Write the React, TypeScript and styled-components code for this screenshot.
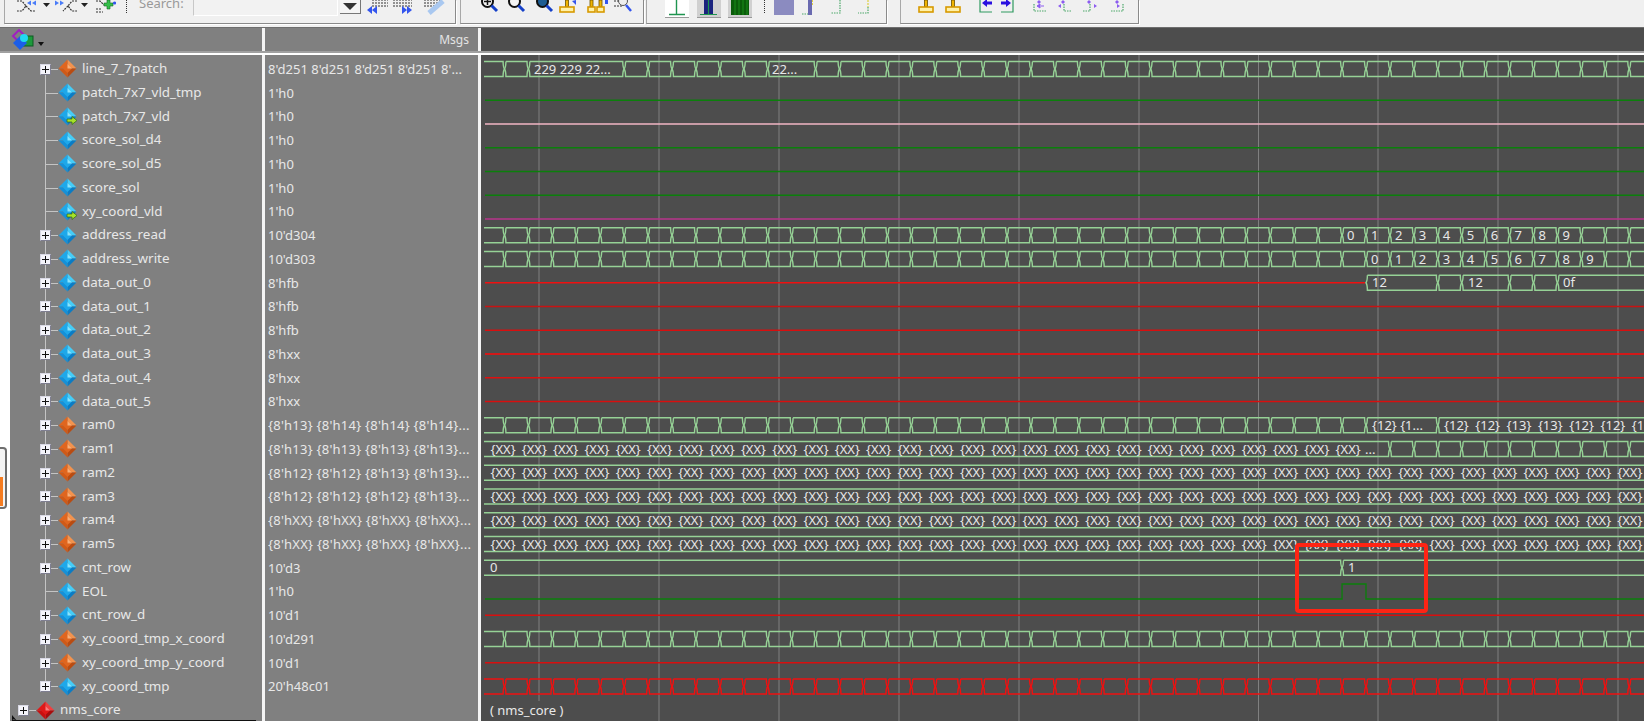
import styled, { createGlobalStyle } from "styled-components";

const FONT = `"Noto Sans", "Liberation Sans", sans-serif`;
const ROW_H = 23.75;
const FIRST_ROW_Y = 69;
const EDGE_X = 504.5;
const EDGE_STEP = 23.93;
const BUS = "#96d296";
const LOW = "#0b7f0b";
const RED = "#d80f0f";

type Kind = "orange" | "blue" | "blueIn" | "red";

interface Signal {
  name: string;
  value: string;
  kind: Kind;
  expand?: boolean;
}

const signals: Signal[] = [
  { name: "line_7_7patch", value: "8'd251 8'd251 8'd251 8'd251 8'...", kind: "orange", expand: true },
  { name: "patch_7x7_vld_tmp", value: "1'h0", kind: "blue" },
  { name: "patch_7x7_vld", value: "1'h0", kind: "blueIn" },
  { name: "score_sol_d4", value: "1'h0", kind: "blue" },
  { name: "score_sol_d5", value: "1'h0", kind: "blue" },
  { name: "score_sol", value: "1'h0", kind: "blue" },
  { name: "xy_coord_vld", value: "1'h0", kind: "blueIn" },
  { name: "address_read", value: "10'd304", kind: "blue", expand: true },
  { name: "address_write", value: "10'd303", kind: "blue", expand: true },
  { name: "data_out_0", value: "8'hfb", kind: "blue", expand: true },
  { name: "data_out_1", value: "8'hfb", kind: "blue", expand: true },
  { name: "data_out_2", value: "8'hfb", kind: "blue", expand: true },
  { name: "data_out_3", value: "8'hxx", kind: "blue", expand: true },
  { name: "data_out_4", value: "8'hxx", kind: "blue", expand: true },
  { name: "data_out_5", value: "8'hxx", kind: "blue", expand: true },
  { name: "ram0", value: "{8'h13} {8'h14} {8'h14} {8'h14}...", kind: "orange", expand: true },
  { name: "ram1", value: "{8'h13} {8'h13} {8'h13} {8'h13}...", kind: "orange", expand: true },
  { name: "ram2", value: "{8'h12} {8'h12} {8'h13} {8'h13}...", kind: "orange", expand: true },
  { name: "ram3", value: "{8'h12} {8'h12} {8'h12} {8'h13}...", kind: "orange", expand: true },
  { name: "ram4", value: "{8'hXX} {8'hXX} {8'hXX} {8'hXX}...", kind: "orange", expand: true },
  { name: "ram5", value: "{8'hXX} {8'hXX} {8'hXX} {8'hXX}...", kind: "orange", expand: true },
  { name: "cnt_row", value: "10'd3", kind: "blue", expand: true },
  { name: "EOL", value: "1'h0", kind: "blue" },
  { name: "cnt_row_d", value: "10'd1", kind: "blue", expand: true },
  { name: "xy_coord_tmp_x_coord", value: "10'd291", kind: "orange", expand: true },
  { name: "xy_coord_tmp_y_coord", value: "10'd1", kind: "orange", expand: true },
  { name: "xy_coord_tmp", value: "20'h48c01", kind: "blue", expand: true },
];

const DIAMOND = {
  orange: ["#f3934e", "#e0661f", "#b94c12", "#cf5a18", "#f7b07a"],
  blue: ["#45cdf8", "#1ea8ea", "#0b7cc4", "#1590d8", "#8be4fc"],
  blueIn: ["#45cdf8", "#1ea8ea", "#0b7cc4", "#1590d8", "#8be4fc"],
  red: ["#f04040", "#e01818", "#a80d0d", "#c81010", "#f88080"],
};

const Diamond = ({ kind }: { kind: Kind }) => {
  const c = DIAMOND[kind];
  return (
    <DiamondSvg viewBox="0 0 19 19">
      <polygon points="9.5,0.5 18.5,9.5 9.5,9.5" fill={c[0]} />
      <polygon points="9.5,0.5 0.5,9.5 9.5,9.5" fill={c[1]} />
      <polygon points="18.5,9.5 9.5,18.5 9.5,9.5" fill={c[2]} />
      <polygon points="0.5,9.5 9.5,18.5 9.5,9.5" fill={c[3]} />
      <polygon points="9.5,5 14,9.5 9.5,14 5,9.5" fill={c[1]} />
      <polygon points="9.5,5 14,9.5 9.5,9.5" fill={c[4]} />
      {kind === "blueIn" && (
        <polygon
          points="9,12 14,12 14,9.5 19,13.5 14,17.5 14,15 9,15"
          fill="#a6e22a"
          stroke="#2f6b10"
          strokeWidth="0.7"
        />
      )}
    </DiamondSvg>
  );
};

const edge = (k: number) => EDGE_X + EDGE_STEP * k;
const rowY = (i: number) => FIRST_ROW_Y + ROW_H * i;

const Segment = ({
  from,
  to,
  cy,
  color,
  open,
}: {
  from: number;
  to: number;
  cy: number;
  color: string;
  open?: boolean;
}) => {
  const t = cy - 7.5;
  const b = cy + 7.5;
  const left = open
    ? `M${from} ${t}`
    : `M${from + 1.4} ${t} Q${from + 1.4} ${cy - 2} ${from} ${cy} Q${from + 1.4} ${cy + 2} ${from + 1.4} ${b}`;
  const start = open ? `M${from} ${b}` : "";
  return (
    <path
      d={`${left} ${start} L${to - 1.4} ${b} Q${to - 1.4} ${cy + 2} ${to} ${cy} Q${to - 1.4} ${cy - 2} ${to - 1.4} ${t} L${open ? from : from + 1.4} ${t}`}
      fill="none"
      stroke={color}
      strokeWidth="1.4"
    />
  );
};

// bus row: stops are edge numbers, -1 means the start of the trace
const Bus = ({
  row,
  stops,
  color = BUS,
}: {
  row: number;
  stops: number[];
  color?: string;
}) => {
  const cy = rowY(row);
  return (
    <>
      {stops.slice(0, -1).map((k, i) => (
        <Segment
          key={k}
          from={k < 0 ? 484 : edge(k)}
          to={edge(stops[i + 1])}
          cy={cy}
          color={color}
          open={k < 0}
        />
      ))}
    </>
  );
};

const range = (a: number, b: number) => Array.from({ length: b - a + 1 }, (_, i) => a + i);

const XxRun = ({ row, count }: { row: number; count: number }) => (
  <>
    {range(0, count - 1).map((i) => (
      <WaveLabel key={i} x={490.5 + 31.3 * i} y={rowY(row) + 4.5}>
        {"{XX}"}
      </WaveLabel>
    ))}
  </>
);

const Rail = ({ y, color, from = 485, to = 1644, w = 1.3 }: { y: number; color: string; from?: number; to?: number; w?: number }) => (
  <line x1={from} x2={to} y1={y} y2={y} stroke={color} strokeWidth={w} />
);

const WaveCanvas = () => (
  <WaveSvg viewBox="481 55 1163 666">
    {[659, 779, 899, 1019, 1139, 1258.5, 1378, 1498, 1618].map((x) => (
      <line key={x} x1={x} x2={x} y1={55} y2={721} stroke="#808080" strokeWidth="1" />
    ))}
    <line x1={539} x2={539} y1={55} y2={701} stroke="#808080" strokeWidth="1" />

    <Bus row={0} stops={[-1, 0, 1, 5, 6, 7, 8, 9, 10, 11, 13, ...range(14, 48)]} />
    <WaveLabel x={534} y={rowY(0) + 4.5}>229 229 22...</WaveLabel>
    <WaveLabel x={772} y={rowY(0) + 4.5}>22...</WaveLabel>

    <Rail y={rowY(1) + 7.5} color={LOW} />
    <Rail y={rowY(2) + 7.5} color="#f2b6c4" />
    <Rail y={rowY(3) + 7.5} color={LOW} />
    <Rail y={rowY(4) + 7.5} color={LOW} />
    <Rail y={rowY(5) + 7.5} color={LOW} />
    <Rail y={rowY(6) + 7.5} color="#b8348c" />

    <Bus row={7} stops={[-1, ...range(0, 48)]} />
    {range(0, 9).map((n) => (
      <WaveLabel key={n} x={edge(35 + n) + 5} y={rowY(7) + 4.5}>{n}</WaveLabel>
    ))}
    <Bus row={8} stops={[-1, ...range(0, 48)]} />
    {range(0, 9).map((n) => (
      <WaveLabel key={n} x={edge(36 + n) + 5} y={rowY(8) + 4.5}>{n}</WaveLabel>
    ))}

    <Rail y={rowY(9)} color="#f01010" to={1365} w={1.5} />
    <Bus row={9} stops={[36, 39, 40, 42, 43, 44, 48]} />
    <WaveLabel x={1372} y={rowY(9) + 4.5}>12</WaveLabel>
    <WaveLabel x={1468} y={rowY(9) + 4.5}>12</WaveLabel>
    <WaveLabel x={1563} y={rowY(9) + 4.5}>0f</WaveLabel>
    <Rail y={rowY(10)} color="#c81212" />
    <Rail y={rowY(11)} color={RED} />
    <Rail y={rowY(12)} color="#ff0808" w={1.5} />
    <Rail y={rowY(13)} color="#e00f0f" />
    <Rail y={rowY(14)} color={RED} />

    <Bus row={15} stops={[-1, ...range(0, 36), 39, 48]} />
    <WaveLabel x={1372} y={rowY(15) + 4.5}>{"{12} {1..."}</WaveLabel>
    {["{12}", "{12}", "{13}", "{13}", "{12}", "{12}", "{1"].map((t, i) => (
      <WaveLabel key={i} x={1444 + 31.3 * i} y={rowY(15) + 4.5}>{t}</WaveLabel>
    ))}

    <Bus row={16} stops={[-1, ...range(37, 48)]} />
    <XxRun row={16} count={28} />
    <WaveLabel x={1365} y={rowY(16) + 4.5}>...</WaveLabel>
    {[17, 18, 19, 20].map((r) => (
      <g key={r}>
        <Bus row={r} stops={[-1, 48]} />
        <XxRun row={r} count={37} />
      </g>
    ))}

    <Bus row={21} stops={[-1, 35, 48]} />
    <WaveLabel x={490} y={rowY(21) + 4.5}>0</WaveLabel>
    <WaveLabel x={1348} y={rowY(21) + 4.5}>1</WaveLabel>

    <path
      d={`M485 ${rowY(22) + 7.5} H${edge(35)} V${rowY(22) - 7.5} H${edge(36)} V${rowY(22) + 7.5} H1644`}
      fill="none"
      stroke={LOW}
      strokeWidth="1.3"
    />
    <Rail y={rowY(23)} color={RED} />
    <Bus row={24} stops={[-1, ...range(0, 48)]} />
    <Rail y={rowY(25)} color={RED} />
    <Bus row={26} stops={[-1, ...range(0, 48)]} color="#f01010" />
    <WaveLabel x={490} y={rowY(27) + 5}>( nms_core )</WaveLabel>
  </WaveSvg>
);

const Dash = styled.path`
  fill: none;
  stroke: #333;
  stroke-width: 1.2;
  stroke-dasharray: 2 1;
`;

const Magnifier = ({ fill, mark }: { fill?: string; mark?: boolean }) => (
  <>
    <circle cx="6.5" cy="1.5" r="5.5" fill={fill ?? "#f4f4f4"} stroke="#111" strokeWidth="2" />
    {mark && <path d="M3 1.5H10M6.5 -2V5" stroke="#111" strokeWidth="1.5" />}
    <path d="M10.5 5.5L16 11" stroke="#1540c8" strokeWidth="3" />
  </>
);

const GoldT = ({ x = 1, w = 14 }: { x?: number; w?: number }) => (
  <>
    <rect x={x + w / 2 - 1.5} y="0" width="3" height="7" fill="#f0b400" stroke="#6b5200" strokeWidth="0.8" />
    <rect x={x} y="7" width={w} height="5" fill="#fff1a8" stroke="#d89a00" strokeWidth="1.6" />
  </>
);

const DotBracket = ({ d }: { d: string }) => (
  <>
    <path d={d} fill="none" stroke="#4ca86a" strokeWidth="1.2" strokeDasharray="1.5 1" />
    <path d="M6 0L8 2L6 4L4 2Z" fill="#8c5cf0" />
  </>
);

const SearchBox = () => (
  <>
    <ToolText $ml={12}>Search:</ToolText>
    <SearchInput $ml={8} />
    <DropButton $ml={2}>
      <svg width="14" height="8" viewBox="0 0 14 8">
        <polygon points="0,0 14,0 7,7" fill="#333" />
      </svg>
    </DropButton>
  </>
);

const Carets = () => <path d="M0 3H7L3.5 7Z" fill="#222" />;

const Toolbar = () => (
  <ToolbarBar>
    <ToolSection $ml={4} $w={452}>
      <ToolIcon $ml={12} width="22" height="24">
        <Dash d="M0 1H5L9 6L5 11H0M9 6L14 11H18" />
        <path d="M10 3L14 0.5V5.5ZM15 3L19 0.5V5.5Z" fill="#4a7cf8" />
      </ToolIcon>
      <ToolIcon $ml={4} width="7" height="24"><Carets /></ToolIcon>
      <ToolIcon $ml={5} width="22" height="24">
        <Dash d="M22 1H17L13 6L17 11H22M13 6L8 11" />
        <path d="M0 0.5L4 3L0 5.5ZM5 0.5L9 3L5 5.5Z" fill="#4a7cf8" />
      </ToolIcon>
      <ToolIcon $ml={4} width="7" height="24"><Carets /></ToolIcon>
      <ToolIcon $ml={7} width="21" height="24">
        <Dash d="M1 1H5L9 5M1 9H6M1 12H8" />
        <path d="M9 3H12V0H15V3H18V6H15V9H12V6H9Z" fill="#35c04a" stroke="#176a25" strokeWidth="0.6" />
        <circle cx="19.5" cy="3" r="1.6" fill="#3355ee" />
      </ToolIcon>
      <ToolDots $ml={10} />
      <SearchBox />
      <ToolIcon $ml={6} width="24" height="24">
        <Dash d="M5 0H21M5 3H21M5 6H21" />
        <path d="M0 10L5 6V14ZM5 10L10 6V14Z" fill="#3355ee" />
      </ToolIcon>
      <ToolIcon $ml={1} width="22" height="24">
        <Dash d="M1 0H20M1 3H20M1 6H20" />
        <path d="M20 10L15 6V14ZM15 10L10 6V14Z" fill="#3355ee" />
      </ToolIcon>
      <ToolIcon $ml={9} width="23" height="24">
        <Dash d="M1 0H18M1 3H16M1 6H12" />
        <path d="M6 13L20 1" stroke="#a9c8f0" strokeWidth="5" />
      </ToolIcon>
    </ToolSection>

    <ToolSection $ml={4} $w={184}>
      <ToolIcon $ml={20} width="18" height="24"><Magnifier mark /></ToolIcon>
      <ToolIcon $ml={9} width="18" height="24"><Magnifier /></ToolIcon>
      <ToolIcon $ml={10} width="18" height="24"><Magnifier fill="#1d5c92" /></ToolIcon>
      <ToolIcon $ml={5} width="20" height="24">
        <GoldT />
        <path d="M13 1L17 0V5Z" fill="#3355ee" />
      </ToolIcon>
      <ToolIcon $ml={8} width="22" height="24">
        <GoldT w={7} />
        <GoldT x={10} w={7} />
        <path d="M18 0H21V4H18Z" fill="#3355ee" />
      </ToolIcon>
      <ToolIcon $ml={4} width="20" height="24">
        <Dash d="M1 1H12M1 6H9" stroke="#3355ee" />
        <circle cx="10" cy="1" r="4.5" fill="#eee" stroke="#555" />
        <path d="M13 5L18 11" stroke="#3355ee" strokeWidth="2.5" />
      </ToolIcon>
    </ToolSection>

    <ToolSection $ml={2} $w={241}>
      <WaveButton $ml={18} $bg="#ffffff">
        <path d="M11.5 0V14M4 14.5H20" stroke="#1f9550" strokeWidth="1.4" />
      </WaveButton>
      <WaveButton $ml={8} $bg="#d0d0d0">
        <rect x="7" y="0" width="9" height="14" fill="#1a237e" />
        <path d="M11.5 0V14M3 14.5H20" stroke="#1f9550" strokeWidth="1.2" />
      </WaveButton>
      <WaveButton $ml={7} $bg="#d0d0d0">
        <rect x="3" y="0" width="18" height="15" fill="#0b5c0b" />
        <path d="M7 0V15M11 0V15M15 0V15M19 0V15" stroke="#1f9a1f" strokeWidth="0.8" />
      </WaveButton>
      <ToolDots $ml={12} />
      <ToolIcon $ml={9} width="20" height="24">
        <rect x="0" y="0" width="20" height="15" fill="#6a6ab0" opacity="0.75" />
      </ToolIcon>
      <ToolIcon $ml={8} width="12" height="24">
        <rect x="6" y="0" width="4" height="15" fill="#6a6ab0" />
        <path d="M10.5 0V6" stroke="#e0d040" strokeWidth="1" strokeDasharray="2 1" />
        <path d="M0 14H6" stroke="#4ca86a" strokeWidth="1.2" strokeDasharray="1.5 1" />
      </ToolIcon>
      <ToolIcon $ml={17} width="10" height="24">
        <path d="M9 0V13H0" fill="none" stroke="#4ca86a" strokeWidth="1.2" strokeDasharray="1.5 1" />
      </ToolIcon>
      <ToolIcon $ml={17} width="11" height="24">
        <path d="M10 0V7" stroke="#e0d040" strokeWidth="1.2" strokeDasharray="2 1" />
        <path d="M10 7V13H0" fill="none" stroke="#4ca86a" strokeWidth="1.2" strokeDasharray="1.5 1" />
      </ToolIcon>
    </ToolSection>

    <ToolSection $ml={13} $w={239}>
      <ToolIcon $ml={17} width="16" height="24"><GoldT /></ToolIcon>
      <ToolIcon $ml={11} width="16" height="24"><GoldT /></ToolIcon>
      <ToolIcon $ml={18} width="14" height="24">
        <path d="M1 0V12H13" fill="none" stroke="#2f9a60" strokeWidth="1.2" />
        <path d="M3 3L8 -1V1.5H13V4.5H8V7Z" fill="#2a10e0" />
      </ToolIcon>
      <ToolIcon $ml={7} width="14" height="24">
        <path d="M13 0V12H1" fill="none" stroke="#2f9a60" strokeWidth="1.2" />
        <path d="M11 3L6 -1V1.5H1V4.5H6V7Z" fill="#2a10e0" />
      </ToolIcon>
      <ToolIcon $ml={19} width="15" height="24">
        <DotBracket d="M1 4V11H14" />
        <path d="M4 6L7 4V8ZM8 6h3" fill="#8c5cf0" stroke="#8c5cf0" />
      </ToolIcon>
      <ToolIcon $ml={9} width="16" height="24">
        <DotBracket d="M7 4V11H15" />
        <path d="M1 6L4 4V8Z" fill="#8c5cf0" />
      </ToolIcon>
      <ToolIcon $ml={10} width="15" height="24">
        <DotBracket d="M7 4V11H0" />
        <path d="M14 6L11 4V8Z" fill="#8c5cf0" />
      </ToolIcon>
      <ToolIcon $ml={13} width="15" height="24">
        <DotBracket d="M12 4V11H0" />
        <path d="M9 6L6 4V8Z" fill="#8c5cf0" />
      </ToolIcon>
    </ToolSection>
  </ToolbarBar>
);

export default function App() {
  return (
    <>
      <GlobalStyle />
      <Page>
        <Toolbar />
        <HeaderBar>
          <HeaderName>
            <svg width="24" height="22" viewBox="0 0 24 22">
              <rect x="12" y="7" width="10" height="10" fill="#1d9a3c" stroke="#0d5a20" />
              <polygon points="8,1 14,7 8,13 2,7" fill="none" stroke="#a020c0" strokeWidth="2" />
              <polygon points="9,7 16,14 9,21 2,14" fill="#1c5ee8" />
              <circle cx="13" cy="9" r="4" fill="#22d8f0" />
            </svg>
            <HeaderCaret />
          </HeaderName>
          <Splitter />
          <HeaderMsgs>Msgs</HeaderMsgs>
          <Splitter />
          <HeaderWave />
        </HeaderBar>
        <Rule />
        <Panes>
          <NamePane>
            {signals.map((s, i) => (
              <NameRow key={s.name}>
                <Guide $first={i === 0} $last={i === signals.length - 1}>
                  {s.expand && <ExpandBox />}
                </Guide>
                <Diamond kind={s.kind} />
                <NameText>{s.name}</NameText>
              </NameRow>
            ))}
            <RootRow>
              <RootGuide>
                <ExpandBox />
              </RootGuide>
              <Diamond kind="red" />
              <NameText>nms_core</NameText>
            </RootRow>
            <PaneFoot />
            <PointerMark viewBox="0 0 8 8">
              <path d="M0 0V7L2 5.5L6 7Z" fill="#111" />
            </PointerMark>
          </NamePane>
          <SideHandle>
            <SideFill />
          </SideHandle>
          <Splitter />
          <ValuePane>
            {signals.map((s) => (
              <ValueRow key={s.name} $brace={s.value.startsWith("{")}>
                {s.value}
              </ValueRow>
            ))}
          </ValuePane>
          <Splitter />
          <WavePane>
            <WaveCanvas />
            <Annotation />
          </WavePane>
        </Panes>
      </Page>
    </>
  );
}

const GlobalStyle = createGlobalStyle`
  html, body {
    margin: 0;
    padding: 0;
    background: #f0f0f0;
    overflow: hidden;
  }
`;

const Page = styled.div`
  width: 1644px;
  height: 721px;
  display: flex;
  flex-direction: column;
  overflow: hidden;
  font-family: ${FONT};
`;

const ToolbarBar = styled.div`
  height: 27px;
  flex: none;
  display: flex;
  align-items: flex-start;
  background: #f0f0f0;
  border-bottom: 1px solid #6e6e6e;
`;

const ToolSection = styled.div<{ $ml: number; $w: number }>`
  margin-left: ${(p) => p.$ml}px;
  width: ${(p) => p.$w}px;
  height: 24px;
  box-sizing: border-box;
  display: flex;
  align-items: flex-start;
  overflow: hidden;
  border-right: 1px solid #8a8a8a;
  border-bottom: 1px solid #8a8a8a;
  border-left: 1px solid #a8a8a8;
  box-shadow: 1px 1px 0 #ffffff;
`;

const ToolIcon = styled.svg<{ $ml: number }>`
  flex: none;
  margin-left: ${(p) => p.$ml}px;
  overflow: hidden;
`;

const ToolDots = styled.div<{ $ml: number }>`
  flex: none;
  width: 0;
  height: 13px;
  margin-left: ${(p) => p.$ml}px;
  border-left: 1px dotted #333;
`;

const ToolText = styled.div<{ $ml: number }>`
  flex: none;
  width: 46px;
  margin-left: ${(p) => p.$ml}px;
  margin-top: -7px;
  font-size: 13px;
  line-height: 20px;
  color: #999999;
`;

const SearchInput = styled.div<{ $ml: number }>`
  flex: none;
  width: 145px;
  height: 16px;
  margin-left: ${(p) => p.$ml}px;
  box-sizing: border-box;
  background: #f2f2f2;
  border-left: 1px solid #c8c8c8;
  border-bottom: 1px solid #ffffff;
  border-right: 1px solid #ffffff;
`;

const DropButton = styled.div<{ $ml: number }>`
  flex: none;
  width: 21px;
  height: 14px;
  margin-left: ${(p) => p.$ml}px;
  box-sizing: border-box;
  display: flex;
  align-items: center;
  justify-content: center;
  background: #f4f4f4;
  border-right: 1px solid #777;
  border-bottom: 1px solid #777;
`;

const WaveButton = styled.svg.attrs({ width: 24, height: 17 })<{ $ml: number; $bg: string }>`
  flex: none;
  margin-left: ${(p) => p.$ml}px;
  background: ${(p) => p.$bg};
  border-bottom: 1px solid #999;
  overflow: hidden;
`;

const HeaderBar = styled.div`
  height: 25px;
  flex: none;
  display: flex;
  background: #808080;
  box-sizing: border-box;
  border-bottom: 2px solid #a0a0a0;
`;

const HeaderName = styled.div`
  width: 262px;
  flex: none;
  box-sizing: border-box;
  padding-left: 11px;
  display: flex;
  align-items: center;
  gap: 3px;
`;

const HeaderCaret = styled.div`
  width: 0;
  height: 0;
  margin-top: 8px;
  border-left: 3px solid transparent;
  border-right: 3px solid transparent;
  border-top: 4px solid #111;
`;

const HeaderMsgs = styled.div`
  width: 213px;
  flex: none;
  box-sizing: border-box;
  padding-right: 9px;
  text-align: right;
  font-size: 12px;
  line-height: 24px;
  color: #e4e4e4;
`;

const HeaderWave = styled.div`
  flex: 1;
  background: #4d4d4d;
`;

const Splitter = styled.div`
  width: 3px;
  flex: none;
  background: #f4f4f4;
`;

const Rule = styled.div`
  height: 2px;
  flex: none;
  background: #ffffff;
`;

const Panes = styled.div`
  flex: 1;
  min-height: 0;
  position: relative;
  display: flex;
  background: #ffffff;
`;

const NamePane = styled.div`
  width: 252px;
  margin-left: 10px;
  flex: none;
  position: relative;
  box-sizing: border-box;
  padding-top: 2px;
  background: #808080;
  display: grid;
  grid-auto-rows: ${ROW_H}px;
  align-content: start;
`;

const NameRow = styled.div`
  display: flex;
  align-items: center;
  padding-left: 30px;
`;

const RootRow = styled(NameRow)`
  padding-left: 8px;
`;

const Guide = styled.div<{ $first: boolean; $last: boolean }>`
  position: relative;
  align-self: stretch;
  flex: none;
  width: 18px;

  &::before {
    content: "";
    position: absolute;
    left: 5px;
    top: ${(p) => (p.$first ? "50%" : "0")};
    bottom: ${(p) => (p.$last ? "50%" : "0")};
    border-left: 1px solid #c4c4c4;
  }

  &::after {
    content: "";
    position: absolute;
    left: 5px;
    right: 0;
    top: 50%;
    border-top: 1px solid #c4c4c4;
  }
`;

const RootGuide = styled(Guide).attrs({ $first: true, $last: true })`
  &::before {
    display: none;
  }
`;

const ExpandBox = styled.div`
  position: absolute;
  left: 0;
  top: 50%;
  width: 11px;
  height: 11px;
  margin-top: -5px;
  box-sizing: border-box;
  background:
    linear-gradient(#111, #111) center / 7px 1px no-repeat,
    linear-gradient(#111, #111) center / 1px 7px no-repeat,
    #f4f4fa;
  border: 1px solid #d8d8e4;
  border-right-color: #7e7e90;
  border-bottom-color: #7e7e90;
  z-index: 1;
`;

const DiamondSvg = styled.svg`
  flex: none;
  width: 19px;
  height: 19px;
  overflow: visible;
`;

const NameText = styled.span`
  margin-left: 5px;
  font-size: 13.4px;
  line-height: 1;
  color: #e8e8e8;
  white-space: nowrap;
`;

const PaneFoot = styled.div`
  position: absolute;
  left: 2px;
  right: 6px;
  bottom: 0;
  height: 1px;
  background: #111;
`;

const PointerMark = styled.svg`
  position: absolute;
  left: 2px;
  bottom: 0;
  width: 6px;
  height: 6px;
`;

const SideHandle = styled.div`
  position: absolute;
  left: 0;
  top: 392px;
  width: 7px;
  height: 62px;
  box-sizing: border-box;
  border: 2px solid #6e6e6e;
  border-left: none;
  border-radius: 0 4px 4px 0;
  background: #f4f4f4;
`;

const SideFill = styled.div`
  width: 3px;
  height: 29px;
  margin-top: 28px;
  background: #f57c20;
`;

const ValuePane = styled.div`
  width: 213px;
  flex: none;
  box-sizing: border-box;
  padding: 2px 0 0 3px;
  background: #808080;
  display: grid;
  grid-auto-rows: ${ROW_H}px;
  align-content: start;
`;

const ValueRow = styled.div<{ $brace: boolean }>`
  display: flex;
  align-items: center;
  font-size: 13px;
  letter-spacing: ${(p) => (p.$brace ? "0.25px" : "0")};
  color: #e8e8e8;
  white-space: nowrap;
  overflow: hidden;
`;

const WavePane = styled.div`
  flex: 1;
  min-width: 0;
  position: relative;
  background: #4d4d4d;
`;

const WaveSvg = styled.svg`
  display: block;
  width: 1163px;
  height: 666px;
`;

const WaveLabel = styled.text`
  font-family: ${FONT};
  font-size: 13px;
  fill: #e8e8e8;
`;

const Annotation = styled.div`
  position: absolute;
  left: 814px;
  top: 488px;
  width: 133px;
  height: 70px;
  box-sizing: border-box;
  border: 4px solid #ff2414;
  border-radius: 4px;
`;
